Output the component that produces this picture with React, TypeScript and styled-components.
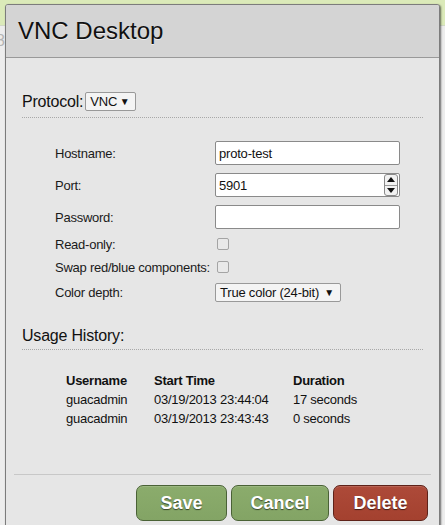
import React from "react";
import styled, { createGlobalStyle } from "styled-components";

const Global = createGlobalStyle`
  html, body { margin: 0; padding: 0; }
  body {
    width: 445px;
    height: 525px;
    overflow: hidden;
    background: #ececec;
    font-family: "Liberation Sans", Arial, sans-serif;
  }
`;

const Page = styled.div`
  position: relative;
  width: 445px;
  height: 525px;
  overflow: hidden;
  background: #ededed;
`;

const TopBand = styled.div`
  height: 25px;
  background: #dbeab9;
  border-bottom: 1px solid #d0d8c4;
`;

const BackText = styled.div`
  margin-left: -4px;
  margin-top: 6px;
  font-size: 16px;
  color: #b4b4b4;
`;

const Dialog = styled.div`
  position: absolute;
  left: 5px;
  top: 4px;
  width: 433px;
  height: 560px;
  border: 1px solid #7c7c7c;
  border-radius: 3px 3px 0 0;
  background: #e6e6e6;
  box-shadow: 1px 1px 2px rgba(0, 0, 0, 0.55);
  display: flex;
  flex-direction: column;
`;

const Header = styled.div`
  height: 52px;
  background: #d4d4d4;
  border-bottom: 1px solid #999;
  border-radius: 2px 2px 0 0;
  display: flex;
  align-items: center;
  padding-left: 12px;
`;

const Title = styled.h1`
  margin: 0;
  font-size: 24px;
  font-weight: normal;
  color: #111;
  text-shadow: 0 1px 0 rgba(255, 255, 255, 0.6);
`;

const Body = styled.div`
  padding: 34px 16px 0 16px;
  display: flex;
  flex-direction: column;
`;

const SectionHead = styled.div<{ $pad: number }>`
  display: flex;
  align-items: center;
  gap: 2px;
  padding-bottom: ${(p) => p.$pad}px;
  border-bottom: 1px dotted #a8a8a8;
  font-size: 16px;
  color: #111;
`;

const HeadLabel = styled.span`
  font-size: 16px;
  line-height: 19px;
  letter-spacing: -0.2px;
`;

const FakeSelect = styled.div<{ $w: number }>`
  box-sizing: border-box;
  width: ${(p) => p.$w}px;
  height: 19px;
  border: 1px solid #999;
  border-radius: 2px;
  background: #f4f4f4;
  display: flex;
  align-items: center;
  justify-content: space-between;
  padding: 0 6px 0 4px;
  font-size: 13px;
  letter-spacing: -0.2px;
  color: #111;
  white-space: nowrap;
`;

const Arrow = styled.span`
  font-size: 10px;
  color: #111;
`;

const Form = styled.div`
  margin-top: 19px;
  margin-left: 33px;
  display: grid;
  grid-template-columns: 160px 185px;
  grid-template-rows: 32px 32px 32px 22px 24px 27px;
  align-items: center;
`;

const Label = styled.div`
  font-size: 13px;
  letter-spacing: -0.25px;
  color: #1a1a1a;
  white-space: nowrap;
`;

const TextInput = styled.div`
  box-sizing: border-box;
  width: 185px;
  height: 24px;
  border: 1px solid #8a8a8a;
  border-radius: 2px;
  background: #fff;
  display: flex;
  align-items: center;
  padding-left: 3px;
  font-size: 13px;
  letter-spacing: -0.2px;
  color: #111;
`;

const InputText = styled.span`
  flex: 1;
`;

const Spinner = styled.div`
  box-sizing: border-box;
  width: 14px;
  height: 22px;
  margin-right: 1px;
  border: 1px solid #8a8a8a;
  border-radius: 3px;
  background: #f2f2f2;
  display: flex;
  flex-direction: column;
`;

const SpinHalf = styled.div<{ $top?: boolean }>`
  flex: 1;
  display: flex;
  align-items: center;
  justify-content: center;
  border-bottom: ${(p) => (p.$top ? "1px solid #9a9a9a" : "none")};
`;

const Check = styled.div`
  box-sizing: border-box;
  width: 12px;
  height: 12px;
  margin-left: 2px;
  border: 1px solid #a4a4a4;
  border-radius: 2px;
  background: #e9e9e9;
`;

const HistoryHead = styled(SectionHead)`
  margin-top: 20px;
`;

const Table = styled.table`
  margin-top: 20px;
  margin-left: 44px;
  border-collapse: collapse;
  font-size: 13px;
  letter-spacing: -0.25px;
  color: #111;
`;

const Th = styled.th<{ $w?: number }>`
  text-align: left;
  font-weight: bold;
  padding: 0;
  height: 20px;
  width: ${(p) => (p.$w ? `${p.$w}px` : "auto")};
`;

const Td = styled.td`
  padding: 0;
  height: 19px;
`;

const Footer = styled.div`
  margin: 46px 8px 0 8px;
  border-top: 1px solid #c8c8c8;
  padding: 10px 3px 0 0;
  display: flex;
  justify-content: flex-end;
  gap: 4px;
`;

const Button = styled.button<{ $red?: boolean; $w: number }>`
  width: ${(p) => p.$w}px;
  height: 36px;
  border-radius: 7px;
  border: 1px solid ${(p) => (p.$red ? "#5e2219" : "#4a6236")};
  background: ${(p) =>
    p.$red
      ? "linear-gradient(#ad4a39, #a4412f)"
      : "linear-gradient(#8bac6c, #83a465)"};
  box-shadow: inset 0 1px 0 rgba(255, 255, 255, 0.15);
  color: #fff;
  font-family: "Liberation Sans", Arial, sans-serif;
  font-size: 18px;
  font-weight: bold;
  text-shadow: 0 1px 1px rgba(0, 0, 0, 0.6);
  padding: 0;
`;

const history = [
  { user: "guacadmin", start: "03/19/2013 23:44:04", dur: "17 seconds" },
  { user: "guacadmin", start: "03/19/2013 23:43:43", dur: "0 seconds" },
];

export default function App() {
  return (
    <>
      <Global />
      <Page>
        <TopBand />
        <BackText>8</BackText>
        <Dialog>
          <Header>
            <Title>VNC Desktop</Title>
          </Header>
          <Body>
            <SectionHead $pad={6}>
              <HeadLabel>Protocol:</HeadLabel>
              <FakeSelect $w={51}>
                VNC <Arrow>▼</Arrow>
              </FakeSelect>
            </SectionHead>
            <Form>
              <Label>Hostname:</Label>
              <TextInput>
                <InputText>proto-test</InputText>
              </TextInput>
              <Label>Port:</Label>
              <TextInput>
                <InputText>5901</InputText>
                <Spinner>
                  <SpinHalf $top>
                    <svg width="8" height="5" viewBox="0 0 8 5">
                      <path d="M0 5 L4 0 L8 5 Z" fill="#111" />
                    </svg>
                  </SpinHalf>
                  <SpinHalf>
                    <svg width="8" height="5" viewBox="0 0 8 5">
                      <path d="M0 0 L8 0 L4 5 Z" fill="#111" />
                    </svg>
                  </SpinHalf>
                </Spinner>
              </TextInput>
              <Label>Password:</Label>
              <TextInput />
              <Label>Read-only:</Label>
              <Check />
              <Label>Swap red/blue components:</Label>
              <Check />
              <Label>Color depth:</Label>
              <FakeSelect $w={126}>
                True color (24-bit) <Arrow>▼</Arrow>
              </FakeSelect>
            </Form>
            <HistoryHead $pad={4}>
              <HeadLabel>Usage History:</HeadLabel>
            </HistoryHead>
            <Table>
              <thead>
                <tr>
                  <Th $w={88}>Username</Th>
                  <Th $w={139}>Start Time</Th>
                  <Th>Duration</Th>
                </tr>
              </thead>
              <tbody>
                {history.map((h, i) => (
                  <tr key={i}>
                    <Td>{h.user}</Td>
                    <Td>{h.start}</Td>
                    <Td>{h.dur}</Td>
                  </tr>
                ))}
              </tbody>
            </Table>
          </Body>
          <Footer>
            <Button $w={91}>Save</Button>
            <Button $w={98}>Cancel</Button>
            <Button $w={95} $red>
              Delete
            </Button>
          </Footer>
        </Dialog>
      </Page>
    </>
  );
}
